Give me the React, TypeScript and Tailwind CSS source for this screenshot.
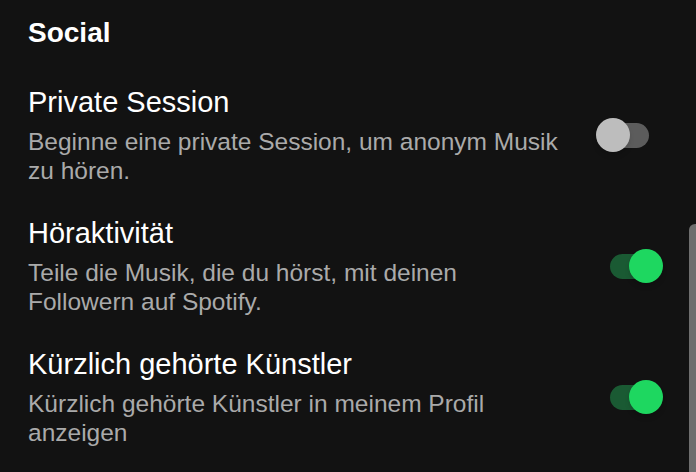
const items = [
  {
    title: 'Private Session',
    desc: 'Beginne eine private Session, um anonym Musik zu hören.',
    on: false,
  },
  {
    title: 'Höraktivität',
    desc: 'Teile die Musik, die du hörst, mit deinen Followern auf Spotify.',
    on: true,
  },
  {
    title: 'Kürzlich gehörte Künstler',
    desc: 'Kürzlich gehörte Künstler in meinem Profil anzeigen',
    on: true,
  },
]

// switch: track in flow, thumb sits over it
function Toggle({ on }: { on: boolean }) {
  return (
    <div className="flex items-center w-[67px] h-[34px] shrink-0">
      <div
        className={
          on
            ? 'relative ml-[14px] w-[51px] h-[25px] rounded-full bg-[#1a5a33]'
            : 'relative ml-[2px] w-[51px] h-[25px] rounded-full bg-[#5c5c5c]'
        }
      >
        <div
          className={
            on
              ? 'absolute -right-[2px] top-1/2 -translate-y-1/2 w-[34px] h-[34px] rounded-full bg-[#1ed760] shadow-md'
              : 'absolute -left-[2px] top-1/2 -translate-y-1/2 w-[34px] h-[34px] rounded-full bg-[#bdbdbd] shadow-md'
          }
        ></div>
      </div>
    </div>
  )
}

export default function App() {
  return (
    <div className="relative w-[696px] h-[472px] overflow-hidden bg-[#121212] font-['Liberation_Sans',Arial,sans-serif]">
      <div className="pt-[15px] pl-[28px] pr-[33px]">
        <h2 className="text-[28px] leading-[36px] font-bold text-white">Social</h2>
        <div className="mt-[34px] flex flex-col gap-[31px]">
          {items.map((item) => (
            <div key={item.title} className="flex items-center justify-between">
              <div className="flex-1 min-w-0">
                <div className="text-[29px] leading-[34px] text-white">{item.title}</div>
                <div className="mt-[8px] max-w-[538px] text-[24.5px] leading-[29px] text-[#aaaaaa]">
                  {item.desc}
                </div>
              </div>
              <Toggle on={item.on} />
            </div>
          ))}
        </div>
      </div>
      {/* overlay scrollbar */}
      <div className="absolute right-0 top-[224px] bottom-0 w-[7px] rounded-tl-[6px] bg-[#6e6e6e]"></div>
    </div>
  )
}
